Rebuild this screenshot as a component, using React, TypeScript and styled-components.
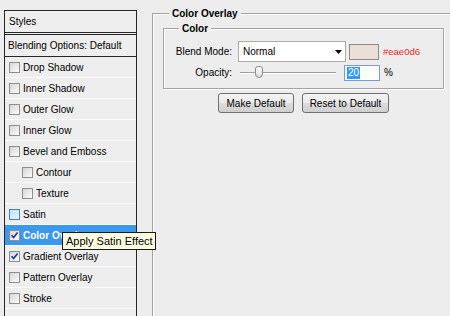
import React from 'react';
import styled, { createGlobalStyle } from 'styled-components';

const Global = createGlobalStyle`
  html, body { margin: 0; padding: 0; }
  body {
    width: 450px; height: 316px; overflow: hidden;
    background: #ededed;
    font-family: "Liberation Sans", Arial, sans-serif;
    font-size: 10px; color: #000;
  }
`;

const Page = styled.div`
  display: flex;
  align-items: flex-start;
  padding-left: 4px;
  height: 316px;
  overflow: hidden;
`;

const Panel = styled.div`
  flex: none;
  width: 133px;
  box-sizing: border-box;
  margin-top: 10px;
  border: 1px solid #262626;
  border-bottom: none;
  background: #eeeeee;
  display: flex;
  flex-direction: column;
`;

const Header = styled.div`
  height: 21px;
  display: flex;
  align-items: center;
  padding-left: 4px;
  border-bottom: 1px solid #262626;
  margin-bottom: 1px;
`;

const Blending = styled.div`
  height: 21px;
  display: flex;
  align-items: center;
  padding-left: 3px;
  border-top: 1px solid #262626;
  border-bottom: 1px solid #262626;
`;

const Row = styled.div<{ $indent?: boolean; $selected?: boolean }>`
  position: relative;
  height: 20px;
  display: flex;
  align-items: center;
  gap: 3px;
  padding-left: ${(p) => (p.$indent ? 17 : 4)}px;
  border-bottom: 1px solid #fbfbfb;
  background: ${(p) => (p.$selected ? '#3b98ef' : 'transparent')};
  color: ${(p) => (p.$selected ? '#fff' : '#000')};
  font-weight: ${(p) => (p.$selected ? 'bold' : 'normal')};
  white-space: nowrap;
`;

const Box = styled.span<{ $hover?: boolean }>`
  flex: none;
  width: 11px;
  height: 11px;
  box-sizing: border-box;
  border: 1px solid ${(p) => (p.$hover ? '#3d84c0' : '#8f8f8f')};
  background: ${(p) =>
    p.$hover
      ? 'linear-gradient(135deg, #c6e2f8, #e6f3fc)'
      : 'linear-gradient(135deg, #d6d6d6, #fbfbfb)'};
  display: flex;
  align-items: center;
  justify-content: center;
`;

const Tooltip = styled.div`
  position: absolute;
  left: 57px;
  top: 7px;
  z-index: 5;
  padding: 0 2px 0 3px;
  height: 16px;
  line-height: 16px;
  border: 1px solid #1a1a1a;
  background: #ffffe1;
  color: #000;
  font-weight: normal;
  font-size: 11px;
`;

const Group = styled.fieldset`
  flex: none;
  margin: 7px 0 0 15px;
  padding: 0 10px 0 10px;
  width: 281px;
  height: 330px;
  border: 1px solid #a2a2a2;
  box-shadow: inset 1px 1px 0 #fff;
  min-width: 0;
`;

const Legend = styled.legend<{ $offset: number }>`
  margin-left: ${(p) => p.$offset}px;
  padding: 0 3px;
  font-weight: bold;
  line-height: 13px;
  background: #ededed;
`;

const Inner = styled.fieldset`
  margin: 2px 0 0 0;
  padding: 6px 0 6px 0;
  border: 1px solid #a2a2a2;
  box-shadow: inset 1px 1px 0 #fff, 1px 1px 0 #fff;
  min-width: 0;
  display: flex;
  flex-direction: column;
  gap: 1px;
`;

const FieldRow = styled.div<{ $h: number }>`
  display: flex;
  align-items: center;
  height: ${(p) => p.$h}px;
`;

const Label = styled.span`
  width: 68px;
  text-align: right;
  flex: none;
`;

const Select = styled.div`
  margin-left: 6px;
  width: 108px;
  height: 21px;
  box-sizing: border-box;
  border: 1px solid #a9a9a9;
  background: #fff;
  display: flex;
  align-items: center;
  justify-content: space-between;
  padding: 0 3px 0 4px;
`;

const Swatch = styled.span`
  margin-left: 3px;
  width: 30px;
  height: 16px;
  box-sizing: border-box;
  border: 1px solid #8c8c8c;
  background: #eae0d6;
`;

const Hex = styled.span`
  margin-left: 4px;
  color: #ec2a2a;
  font-size: 9.5px;
`;

const Slider = styled.div`
  position: relative;
  margin-left: 8px;
  width: 96px;
  height: 19px;
  display: flex;
  align-items: center;
`;

const Track = styled.div`
  width: 100%;
  height: 1px;
  background: #9c9c9c;
  border-bottom: 1px solid #fff;
`;

const Thumb = styled.div`
  position: absolute;
  top: 3px;
  width: 8px;
  height: 12px;
  box-sizing: border-box;
  border: 1px solid #8a8a8a;
  border-radius: 3px 3px 4px 4px;
  background: linear-gradient(#fdfdfd, #dcdcdc);
`;

const Input = styled.div`
  margin-left: 8px;
  width: 36px;
  height: 16px;
  box-sizing: border-box;
  border: 1px solid #7b9bcf;
  background: #fff;
  padding: 1px 2px;
  display: flex;
`;

const Selected = styled.span`
  background: #3399ff;
  color: #fff;
  padding: 0 1px;
  line-height: 12px;
`;

const Unit = styled.span`
  margin-left: 4px;
`;

const Buttons = styled.div`
  margin-top: 4px;
  display: flex;
  justify-content: center;
  gap: 8px;
`;

const Button = styled.button<{ $w: number }>`
  width: ${(p) => p.$w}px;
  height: 20px;
  padding: 0;
  border: 1px solid #707070;
  border-radius: 3px;
  background: linear-gradient(#f3f3f3 0%, #ebebeb 50%, #dddddd 51%, #cfcfcf 100%);
  font-family: "Liberation Sans", Arial, sans-serif;
  font-size: 10px;
  color: #000;
`;

const Check = () => (
  <svg width="9" height="9" viewBox="0 0 9 9">
    <path d="M1.5 4.2 L3.6 6.6 L7.6 1.6" fill="none" stroke="#23399a" strokeWidth="1.6" />
  </svg>
);

const Arrow = () => (
  <svg width="7" height="4" viewBox="0 0 7 4">
    <path d="M0 0 H7 L3.5 4 Z" fill="#000" />
  </svg>
);

type Item = { label: string; checked?: boolean; indent?: boolean; hover?: boolean; selected?: boolean; tip?: string };

const items: Item[] = [
  { label: 'Drop Shadow' },
  { label: 'Inner Shadow' },
  { label: 'Outer Glow' },
  { label: 'Inner Glow' },
  { label: 'Bevel and Emboss' },
  { label: 'Contour', indent: true },
  { label: 'Texture', indent: true },
  { label: 'Satin', hover: true },
  { label: 'Color Overlay', checked: true, selected: true, tip: 'Apply Satin Effect' },
  { label: 'Gradient Overlay', checked: true },
  { label: 'Pattern Overlay' },
  { label: 'Stroke' },
];

export default function App() {
  const opacity = 20;
  return (
    <>
      <Global />
      <Page>
        <Panel>
          <Header>Styles</Header>
          <Blending>Blending Options: Default</Blending>
          {items.map((it) => (
            <Row key={it.label} $indent={it.indent} $selected={it.selected}>
              <Box $hover={it.hover}>{it.checked && <Check />}</Box>
              <span>{it.label}</span>
              {it.tip && <Tooltip>{it.tip}</Tooltip>}
            </Row>
          ))}
          <Row />
        </Panel>
        <Group>
          <Legend $offset={6}>Color Overlay</Legend>
          <Inner>
            <Legend $offset={15}>Color</Legend>
            <FieldRow $h={21}>
              <Label>Blend Mode:</Label>
              <Select>
                <span>Normal</span>
                <Arrow />
              </Select>
              <Swatch />
              <Hex>#eae0d6</Hex>
            </FieldRow>
            <FieldRow $h={19}>
              <Label>Opacity:</Label>
              <Slider>
                <Track />
                <Thumb style={{ left: `${(opacity / 100) * 96 - 4}px` }} />
              </Slider>
              <Input>
                <Selected>20</Selected>
              </Input>
              <Unit>%</Unit>
            </FieldRow>
          </Inner>
          <Buttons>
            <Button $w={76}>Make Default</Button>
            <Button $w={87}>Reset to Default</Button>
          </Buttons>
        </Group>
      </Page>
    </>
  );
}
